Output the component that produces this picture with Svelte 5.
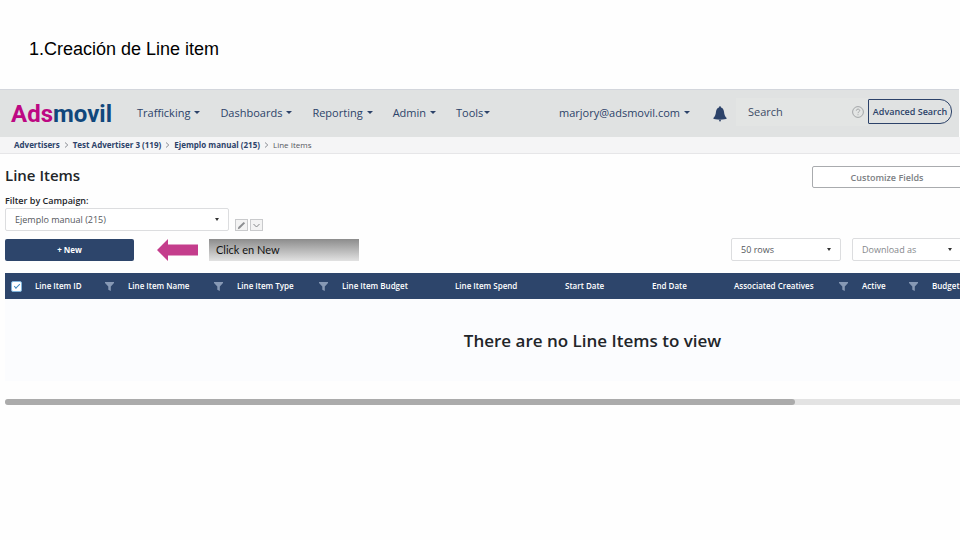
<script>
  const menus = ['Trafficking', 'Dashboards', 'Reporting', 'Admin'];
  const crumbs = ['Advertisers', 'Test Advertiser 3 (119)', 'Ejemplo manual (215)'];
  const columns = [
    { label: 'Line Item ID', width: 93, filter: true },
    { label: 'Line Item Name', width: 109, filter: true },
    { label: 'Line Item Type', width: 105, filter: true },
    { label: 'Line Item Budget', width: 113 },
    { label: 'Line Item Spend', width: 110 },
    { label: 'Start Date', width: 87 },
    { label: 'End Date', width: 82 },
    { label: 'Associated Creatives', width: 128, filter: true },
    { label: 'Active', width: 70, filter: true },
    { label: 'Budget', width: 254 }
  ];
  let allSelected = $state(true);
</script>

<main>
  <h1 class="slide-title">1.Creación de Line item</h1>

  <header>
    <a class="logo" href="#home"><span>Ads</span>movil</a>
    <nav>
      {#each menus as menu}
        <button class="menu">{menu}<i class="caret"></i></button>
      {/each}
      <button class="menu tight">Tools<i class="caret"></i></button>
    </nav>
    <div class="account">
      <button class="menu">marjory@adsmovil.com<i class="caret"></i></button>
      <button class="bell" aria-label="Notifications">
        <svg width="14" height="16" viewBox="0 0 14 16">
          <path d="M7 .3c.6 0 .9.500 1 1.200 1.800.5 2.700 2 3 4.300.3 3 1 5 2.900 6.500-.8 1-3.600 1.400-6.900 1.400S.9 13.300.100 12.300C2 10.800 2.700 8.800 3 5.800c.3-2.300 1.200-3.800 3-4.300.100-.700.4-1.200 1-1.200Z" />
          <circle cx="7" cy="14.600" r=".9" />
        </svg>
      </button>
      <div class="search">
        <input type="text" placeholder="Search" aria-label="Search" />
        <svg class="help" width="12" height="12" viewBox="0 0 12 12">
          <circle cx="6" cy="6" r="5.400" />
          <path d="M4.300 4.700c0-2.200 3.400-2.100 3.400-.1C7.700 5.700 6 5.800 6 7.200M6 8.300v.9" />
        </svg>
      </div>
      <button class="advanced">Advanced Search</button>
    </div>
  </header>

  <nav class="crumbs" aria-label="Breadcrumb">
    {#each crumbs as crumb}
      <a href="#crumb">{crumb}</a>
      <svg width="5" height="6" viewBox="0 0 5 6"><path d="M1 .5 3.800 3 1 5.500" /></svg>
    {/each}
    <span>Line Items</span>
  </nav>

  <section>
    <div class="heading">
      <h2>Line Items</h2>
      <button class="customize">Customize Fields</button>
    </div>

    <label class="filter-label" for="campaign">Filter by Campaign:</label>
    <div class="filter-row">
      <div class="select campaign">
        <select id="campaign"><option>Ejemplo manual (215)</option></select>
        <i class="caret"></i>
      </div>
      <button class="mini" aria-label="Edit campaign">
        <svg width="9" height="9" viewBox="0 0 9 9"><path class="pencil" d="m.8 8.200.6-2.100L6.700.9l1.400 1.300-5.300 5.300Z" /></svg>
      </button>
      <button class="mini" aria-label="More options">
        <svg width="9" height="9" viewBox="0 0 9 9"><path class="chevron" d="m1.500 3 3 3 3-3" /></svg>
      </button>
    </div>

    <div class="toolbar">
      <button class="new">+ New</button>
      <svg class="arrow" width="41" height="22" viewBox="0 0 41 22"><path d="M0 11 11 0v5.500h30v11H11V22Z" /></svg>
      <p class="note">Click en New</p>
      <div class="select rows">
        <select aria-label="Rows per page"><option>50 rows</option></select>
        <i class="caret"></i>
      </div>
      <div class="select download">
        <select aria-label="Download as"><option>Download as</option></select>
        <i class="caret"></i>
      </div>
    </div>

    <div class="viewport">
      <table>
        <colgroup>
          <col style:width="24px" />
          {#each columns as column}
            <col style:width="{column.width}px" />
          {/each}
        </colgroup>
        <thead>
          <tr>
            <th><input type="checkbox" aria-label="Select all" bind:checked={allSelected} /></th>
            {#each columns as column}
              <th>
                <div class="cell">
                  {column.label}
                  {#if column.filter}
                    <svg width="9" height="9" viewBox="0 0 9 9"><path d="M0 0h9v1L5.800 4.600V9L3.300 7.800V4.600L0 1Z" /></svg>
                  {/if}
                </div>
              </th>
            {/each}
          </tr>
        </thead>
        <tbody>
          <tr><td colspan={columns.length + 1}>There are no Line Items to view</td></tr>
        </tbody>
      </table>
    </div>
    <div class="track"><div class="thumb"></div></div>
  </section>
</main>

<style>
  :global(body) {
    background: #fefefe;
  }
  main {
    overflow: hidden;
    font-family: 'Open Sans', sans-serif;
    color: #222529;
  }
  button,
  select,
  input {
    font: inherit;
    color: inherit;
    margin: 0;
    padding: 0;
    border: 0;
    background: none;
    box-sizing: border-box;
  }
  svg {
    flex: none;
    display: block;
  }
  .slide-title {
    margin: 0;
    padding: 37px 29px 28px;
    font: 400 18px/24px 'Liberation Sans', Arial, sans-serif;
    color: #000;
  }
  .caret {
    flex: none;
    border: 3px solid transparent;
    border-top-color: currentColor;
    border-bottom: 0;
  }

  header {
    display: flex;
    align-items: center;
    height: 48px;
    margin-right: 1px;
    padding: 0 7px 0 11px;
    box-sizing: border-box;
    border-top: 1px solid #d3d6dc;
    background: #e0e2e2;
    color: #2c4269;
    font-size: 11px;
  }
  .logo {
    width: 126px;
    font: 700 24px/28px Roboto, sans-serif;
    color: #10477c;
    text-decoration: none;
  }
  .logo span {
    color: #bd0883;
  }
  header nav {
    display: flex;
    gap: 20px;
  }
  .menu {
    display: flex;
    align-items: center;
    gap: 4px;
    padding-bottom: 2px;
  }
  .tight {
    gap: 1px;
  }
  .account {
    display: flex;
    align-items: center;
    margin-left: auto;
  }
  .bell {
    margin: 0 9px 0 23px;
  }
  .bell svg {
    fill: #2c4269;
  }
  .search {
    display: flex;
    align-items: center;
    width: 132px;
    height: 28px;
    margin-bottom: 4px;
    padding: 0 4px 0 6px;
    box-sizing: border-box;
    background: #e3e5e4;
  }
  .search input {
    flex: 1;
    min-width: 0;
    padding-left: 6px;
  }
  .search input::placeholder {
    color: #3d4c66;
    opacity: 1;
  }
  .help {
    fill: none;
    stroke: #a3a6a8;
  }
  .advanced {
    width: 84px;
    height: 25px;
    margin-bottom: 4px;
    border: 1px solid #2c4269;
    border-radius: 1px 12px 12px 1px;
    font-size: 9px;
    font-weight: 600;
    white-space: nowrap;
  }

  .crumbs {
    display: flex;
    align-items: center;
    gap: 4px;
    height: 16px;
    padding: 0 14px;
    border-bottom: 1px solid #e6e6e8;
    background: #f5f5f6;
    font-size: 8px;
    line-height: 14px;
    color: #55585e;
  }
  .crumbs a {
    color: #2c4269;
    font-weight: 700;
    text-decoration: none;
  }
  .crumbs svg {
    fill: none;
    stroke: #8b8e94;
  }

  section {
    padding-left: 5px;
    margin-right: -2px;
  }
  .heading {
    display: flex;
    justify-content: space-between;
    align-items: flex-start;
    padding-top: 12px;
  }
  h2 {
    margin: 0;
    font-size: 15px;
    line-height: 18px;
    font-weight: 600;
  }
  .customize {
    width: 150px;
    height: 22px;
    border: 1px solid #a9abae;
    border-radius: 2px;
    background: #fff;
    font-size: 9px;
    font-weight: 600;
    color: #7b7e82;
  }
  .filter-label {
    display: block;
    padding-top: 6px;
    font-size: 9px;
    line-height: 14px;
    font-weight: 600;
  }
  .filter-row {
    display: flex;
    align-items: flex-end;
    gap: 2px;
  }
  .select {
    display: flex;
    align-items: center;
    height: 23px;
    padding-right: 9px;
    box-sizing: border-box;
    border: 1px solid #dcdddf;
    border-radius: 2px;
    background: #fff;
    font-size: 9px;
    color: #55585c;
  }
  .select select {
    flex: 1;
    min-width: 0;
    height: 100%;
    padding-left: 9px;
    appearance: none;
  }
  .select .caret {
    border-width: 2px;
    border-top: 3px solid #333;
    border-bottom: 0;
  }
  .campaign {
    width: 224px;
    margin-right: 4px;
  }
  .mini {
    display: grid;
    place-items: center;
    width: 13px;
    height: 12px;
    border: 1px solid #c9cacc;
    background: #f3f3f3;
  }
  .pencil {
    fill: #8b8d90;
  }
  .chevron {
    fill: none;
    stroke: #85878a;
  }
  .toolbar {
    display: flex;
    align-items: center;
    padding: 7px 0 12px;
  }
  .new {
    width: 129px;
    height: 22px;
    border-radius: 2px;
    background: #2d456b;
    color: #fff;
    font-size: 8px;
    font-weight: 700;
  }
  .arrow {
    margin: 0 11px 0 23px;
    fill: #c43d8c;
  }
  .note {
    width: 150px;
    margin: 0 auto 0 0;
    padding: 0 0 0 7px;
    box-sizing: border-box;
    background: linear-gradient(#8c8c8c, #e2e2e2);
    color: #111;
    font: 400 11px/22px Lato, sans-serif;
  }
  .rows {
    width: 110px;
    margin-right: 11px;
  }
  .download {
    width: 110px;
    color: #85888c;
  }

  .viewport {
    overflow: hidden;
  }
  table {
    width: 1175px;
    table-layout: fixed;
    border-collapse: collapse;
  }
  th {
    height: 26px;
    padding: 0 0 0 6px;
    background: #2d456b;
    color: #fff;
    font-size: 8px;
    line-height: 12px;
    font-weight: 600;
    text-align: left;
    white-space: nowrap;
  }
  .cell {
    display: flex;
    align-items: center;
    justify-content: space-between;
    padding-right: 8px;
  }
  .cell svg {
    fill: #8799b5;
  }
  th input {
    display: grid;
    place-items: center;
    width: 11px;
    height: 11px;
    border: 1px solid #7fb4dc;
    border-radius: 2px;
    background: #fff;
    appearance: none;
  }
  th input:checked::before {
    content: '';
    width: 5px;
    height: 2px;
    margin-bottom: 2px;
    border: solid #3d86bd;
    border-width: 0 0 1px 1px;
    transform: rotate(-45deg);
  }
  td {
    height: 82px;
    padding: 0;
    background: #fbfcfe;
    font-size: 17px;
    font-weight: 600;
    text-align: center;
  }
  .track {
    height: 6px;
    margin-top: 18px;
    border-radius: 3px;
    background: #e3e3e3;
  }
  .thumb {
    width: 82.5%;
    height: 100%;
    border-radius: 3px;
    background: #ababab;
  }
</style>
